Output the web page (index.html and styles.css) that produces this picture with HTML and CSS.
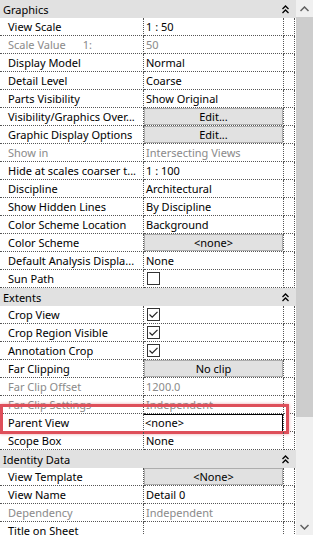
FILE: index.html
```html
<!DOCTYPE html>
<html lang="en">
<head>
    <meta charset="UTF-8">
    <meta name="viewport" content="width=device-width, initial-scale=1.0">
    <title>Properties</title>
    <link rel="stylesheet" href="styles.css">
</head>
<body>
    <div class="panel">
        <div class="grid">
            <div class="group">
                <span>Graphics</span>
                <svg class="collapse" width="7" height="9" viewBox="0 0 7 9"><path d="M0.5 4 L3.5 1 L6.5 4 M0.5 8 L3.5 5 L6.5 8" fill="none" stroke="#000" stroke-width="1.3"/></svg>
            </div>
            <div class="row"><div class="label">View Scale</div><div class="value">1 : 50</div><div class="end"></div></div>
            <div class="row"><div class="label dim">Scale Value <span class="ratio">1:</span></div><div class="value dim">50</div><div class="end"></div></div>
            <div class="row"><div class="label">Display Model</div><div class="value">Normal</div><div class="end"></div></div>
            <div class="row"><div class="label">Detail Level</div><div class="value">Coarse</div><div class="end"></div></div>
            <div class="row"><div class="label">Parts Visibility</div><div class="value">Show Original</div><div class="end"></div></div>
            <div class="row"><div class="label">Visibility/Graphics Over...</div><div class="value"><div class="btn">Edit...</div></div><div class="end"></div></div>
            <div class="row"><div class="label">Graphic Display Options</div><div class="value"><div class="btn">Edit...</div></div><div class="end"></div></div>
            <div class="row"><div class="label dim">Show in</div><div class="value dim">Intersecting Views</div><div class="end"></div></div>
            <div class="row"><div class="label">Hide at scales coarser t...</div><div class="value">1 : 100</div><div class="end"></div></div>
            <div class="row"><div class="label">Discipline</div><div class="value">Architectural</div><div class="end"></div></div>
            <div class="row"><div class="label">Show Hidden Lines</div><div class="value">By Discipline</div><div class="end"></div></div>
            <div class="row"><div class="label">Color Scheme Location</div><div class="value">Background</div><div class="end"></div></div>
            <div class="row"><div class="label">Color Scheme</div><div class="value"><div class="btn">&lt;none&gt;</div></div><div class="end"></div></div>
            <div class="row"><div class="label">Default Analysis Displa...</div><div class="value">None</div><div class="end"></div></div>
            <div class="row"><div class="label">Sun Path</div><div class="value"><span class="check"></span></div><div class="end"></div></div>

            <div class="group">
                <span>Extents</span>
                <svg class="collapse" width="7" height="9" viewBox="0 0 7 9"><path d="M0.5 4 L3.5 1 L6.5 4 M0.5 8 L3.5 5 L6.5 8" fill="none" stroke="#000" stroke-width="1.3"/></svg>
            </div>
            <div class="row"><div class="label">Crop View</div><div class="value"><span class="check on"><svg width="11" height="11" viewBox="0 0 11 11"><path d="M1.5 5.5 L4.2 8.2 L9.5 2.8" fill="none" stroke="#222" stroke-width="1.2"/></svg></span></div><div class="end"></div></div>
            <div class="row"><div class="label">Crop Region Visible</div><div class="value"><span class="check on"><svg width="11" height="11" viewBox="0 0 11 11"><path d="M1.5 5.5 L4.2 8.2 L9.5 2.8" fill="none" stroke="#222" stroke-width="1.2"/></svg></span></div><div class="end"></div></div>
            <div class="row"><div class="label">Annotation Crop</div><div class="value"><span class="check on"><svg width="11" height="11" viewBox="0 0 11 11"><path d="M1.5 5.5 L4.2 8.2 L9.5 2.8" fill="none" stroke="#222" stroke-width="1.2"/></svg></span></div><div class="end"></div></div>
            <div class="row"><div class="label">Far Clipping</div><div class="value"><div class="btn">No clip</div></div><div class="end"></div></div>
            <div class="row"><div class="label dim">Far Clip Offset</div><div class="value dim">1200.0</div><div class="end"></div></div>
            <div class="row"><div class="label dim">Far Clip Settings</div><div class="value dim">Independent</div><div class="end"></div></div>
            <div class="row marked">
                <div class="label">Parent View</div><div class="value"><div class="field">&lt;none&gt;</div></div><div class="end"></div>
                <div class="highlight"></div>
            </div>
            <div class="row"><div class="label">Scope Box</div><div class="value">None</div><div class="end"></div></div>

            <div class="group">
                <span>Identity Data</span>
                <svg class="collapse" width="7" height="9" viewBox="0 0 7 9"><path d="M0.5 4 L3.5 1 L6.5 4 M0.5 8 L3.5 5 L6.5 8" fill="none" stroke="#000" stroke-width="1.3"/></svg>
            </div>
            <div class="row"><div class="label">View Template</div><div class="value"><div class="btn">&lt;None&gt;</div></div><div class="end"></div></div>
            <div class="row"><div class="label">View Name</div><div class="value">Detail 0</div><div class="end"></div></div>
            <div class="row"><div class="label dim">Dependency</div><div class="value dim">Independent</div><div class="end"></div></div>
            <div class="row"><div class="label">Title on Sheet</div><div class="value"></div><div class="end"></div></div>
        </div>

        <div class="scrollbar">
            <div class="arrow"><svg width="9" height="6" viewBox="0 0 9 6"><path d="M0.5 5 L4.5 1 L8.5 5" fill="none" stroke="#606060" stroke-width="1.5"/></svg></div>
            <div class="thumb"></div>
            <div class="track"></div>
            <div class="arrow"><svg width="9" height="6" viewBox="0 0 9 6"><path d="M0.5 1 L4.5 5 L8.5 1" fill="none" stroke="#606060" stroke-width="1.5"/></svg></div>
        </div>
    </div>
</body>
</html>
```

FILE: styles.css
```css
body {
    margin: 0;
    padding: 0;
    background-color: white;
    font-family: "Noto Sans", sans-serif;
    font-size: 11px;
    color: #000;
    overflow: hidden;
}
.panel {
    display: flex;
    width: 313px;
    height: 535px;
    overflow: hidden;
}
.grid {
    width: 296px;
    flex: none;
}
.group {
    display: flex;
    align-items: center;
    justify-content: space-between;
    height: 18px;
    padding: 0 7px 0 3px;
    background-color: #e1e1e1;
    box-sizing: border-box;
}
.collapse {
    display: block;
}
.row {
    display: grid;
    grid-template-columns: 144px 140px 11px;
    height: 18px;
    position: relative;
}
.row > div {
    border-bottom: 1px dotted #555;
    border-right: 1px dotted #555;
    box-sizing: border-box;
    display: flex;
    align-items: center;
    white-space: nowrap;
    overflow: hidden;
}
.label {
    padding-left: 8px;
}
.value {
    padding-left: 2px;
}
.dim {
    color: #8a8a8a;
}
.ratio {
    margin-left: 17px;
}
.btn {
    width: 139px;
    height: 17px;
    margin-left: -2px;
    align-self: flex-start;
    background-color: #e1e1e1;
    border: 1px solid #adadad;
    box-sizing: border-box;
    text-align: center;
    line-height: 15px;
}
.check {
    width: 13px;
    height: 13px;
    margin-left: 1px;
    border: 1px solid #333;
    box-sizing: border-box;
    background-color: white;
    display: flex;
    align-items: center;
    justify-content: center;
}
.field {
    width: 140px;
    height: 18px;
    margin-left: -3px;
    border: 1px solid #000;
    box-sizing: border-box;
    background-color: white;
    line-height: 16px;
    padding-left: 1px;
}
.row.marked > .highlight {
    position: absolute;
    left: 0;
    top: -10px;
    width: 289px;
    height: 30px;
    border: 3px solid #de4f5a;
    box-shadow: 0 0 3px rgba(222, 79, 90, 0.5);
    overflow: visible;
}
.scrollbar {
    width: 17px;
    flex: none;
    display: flex;
    flex-direction: column;
    background-color: #f0f0f0;
}
.arrow {
    height: 17px;
    display: flex;
    align-items: center;
    justify-content: center;
}
.thumb {
    height: 400px;
    background-color: #cdcdcd;
}
.track {
    flex: 1;
}
```
